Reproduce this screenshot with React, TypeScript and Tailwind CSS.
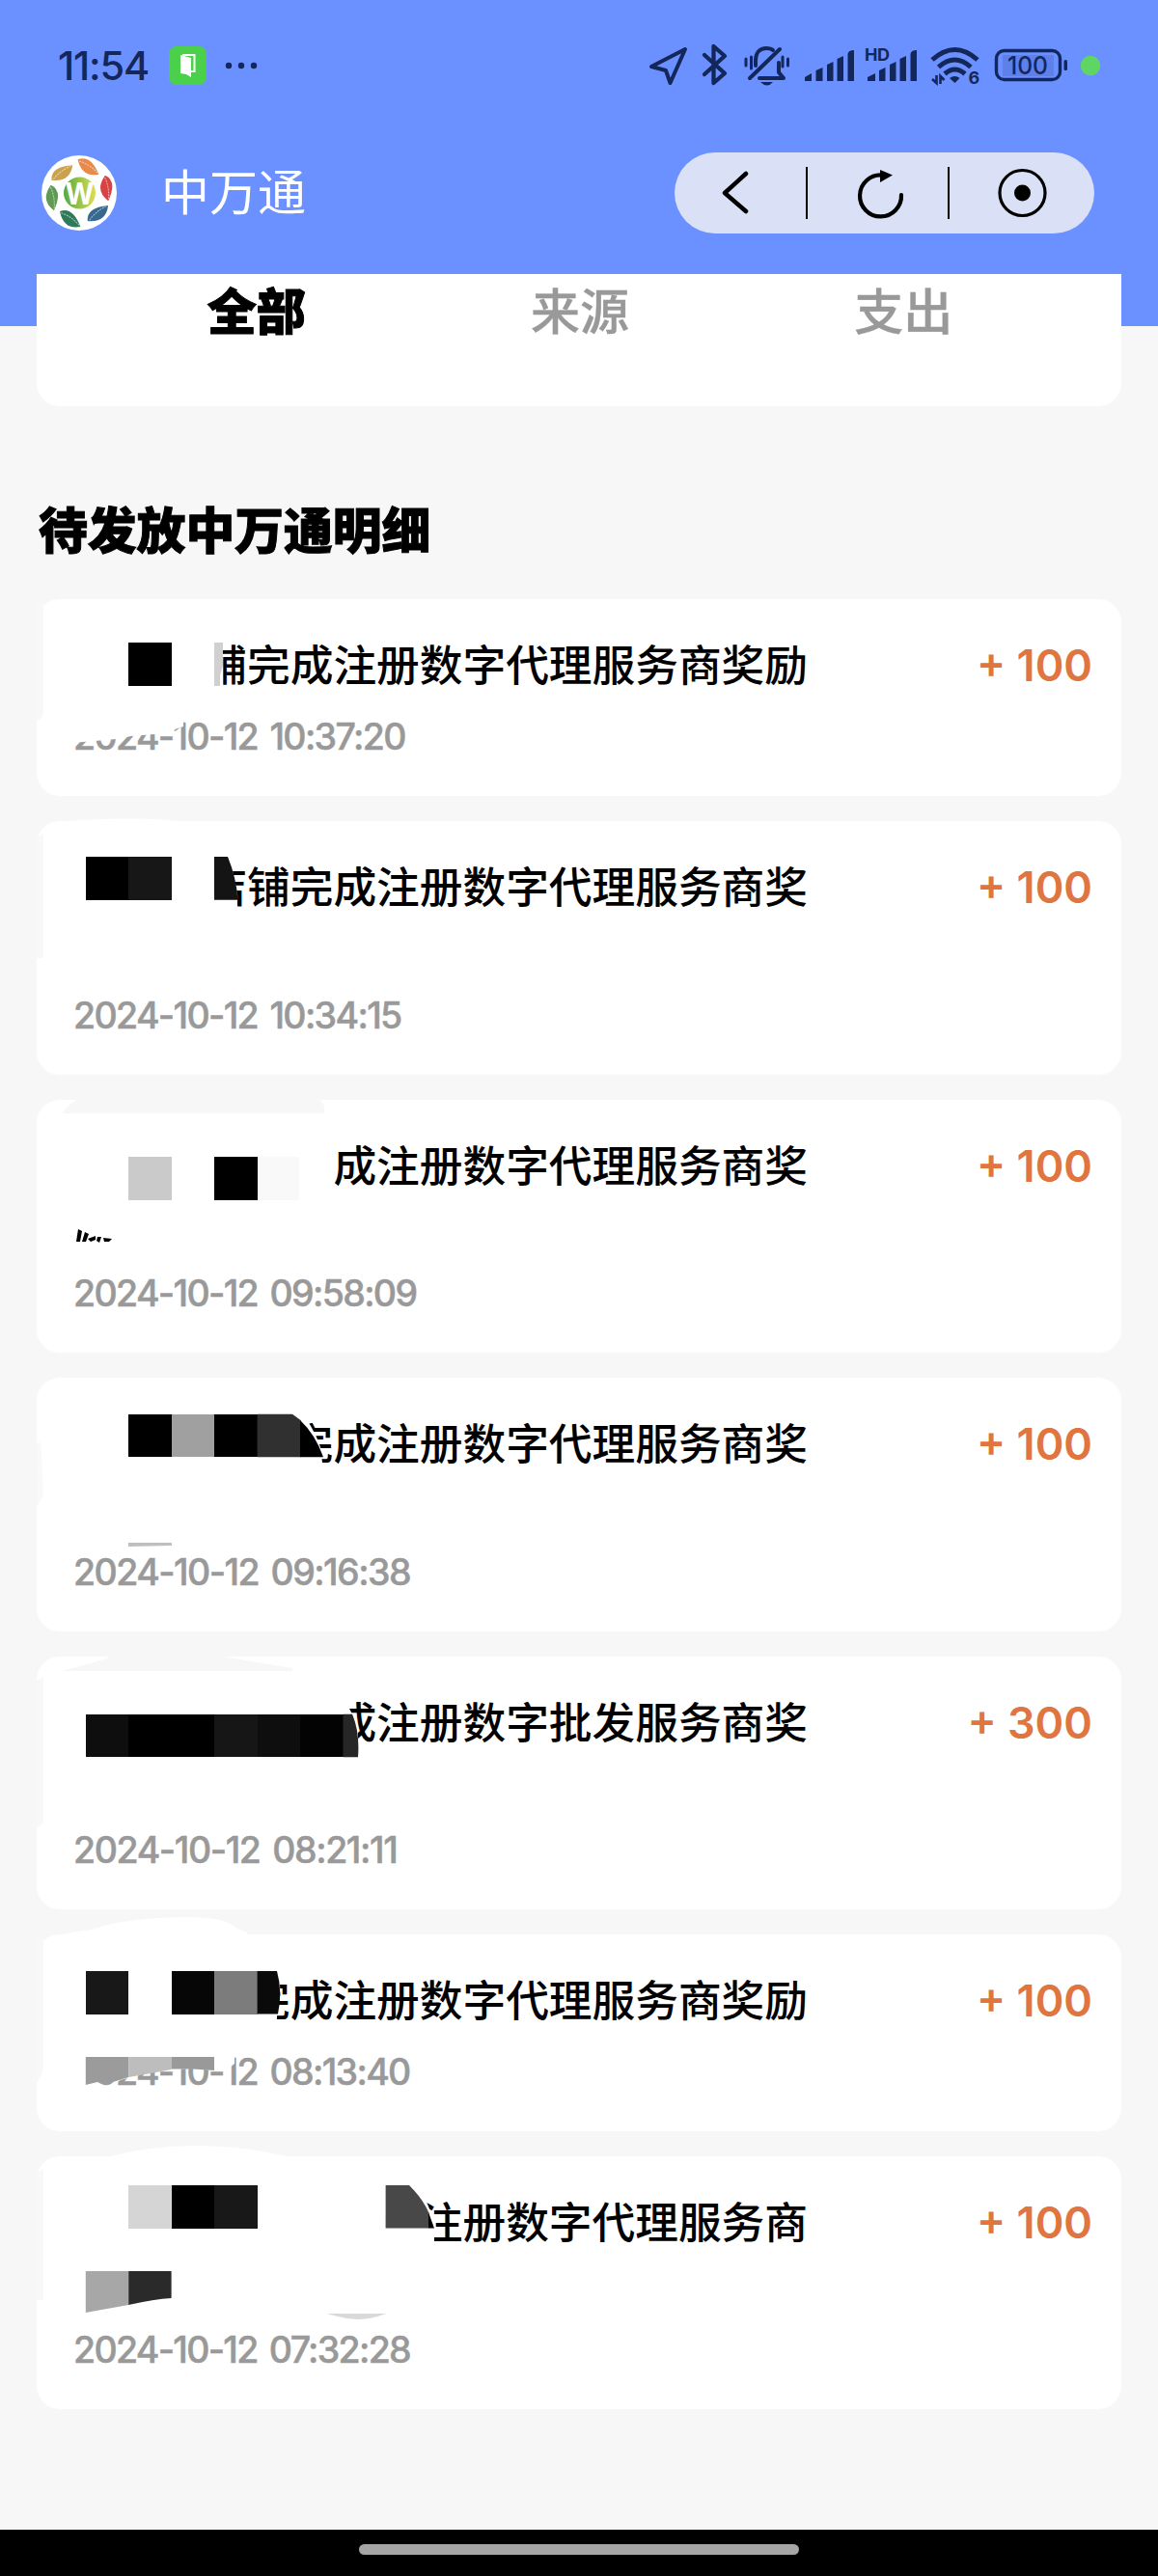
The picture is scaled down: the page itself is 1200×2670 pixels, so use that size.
import React from 'react';

type Cell = [x: number, width: number, fill: string];

interface RewardRecord {
  title: string;
  amount: string;
  time: string;
  size: string;
  tracking: string;
  // page y of the card, used as origin of the cover drawing
  top: number;
  cover: React.ReactNode;
}

const Cells = ({ y, h = 44.6, cells }: { y: number; h?: number; cells: Cell[] }) => (
  <g shapeRendering="crispEdges">
    {cells.map(([x, width, fill]) => (
      <rect key={x} x={x} y={y} width={width} height={h} fill={fill} />
    ))}
  </g>
);

const records: RewardRecord[] = [
  {
    title: '铺完成注册数字代理服务商奖励',
    amount: '+ 100',
    time: '2024-10-12 10:37:20',
    size: 'h-[204px]',
    tracking: 'tracking-[-1.65px]',
    top: 621,
    cover: (
      <>
        <path d="M38 621H45V740Q44 745 38 747Z" fill="#f8f8f8" />
        <path d="M200 655H231V690L228 715H200Z" fill="#fff" />
        <Cells y={666} cells={[[133.2, 44.4, '#000'], [222, 9, '#d0d0d0']]} />
        <path d="M228 700L231 690V711H228Z" fill="#fff" />
        <path d="M70 740H190V753L178 757L160 761L136 763L120 766L98 768L74 770Z" fill="#fff" />
      </>
    ),
  },
  {
    title: '店铺完成注册数字代理服务商奖',
    amount: '+ 100',
    time: '2024-10-12 10:34:15',
    size: 'h-[263px]',
    tracking: 'tracking-[-1.65px]',
    top: 851,
    cover: (
      <>
        <path d="M38 868L45 864V993H38Z" fill="#f8f8f8" />
        <path d="M58 852Q140 845 195 852Z" fill="#fff" />
        <path d="M200 880H233Q242 900 246 928V945H200Z" fill="#fff" />
        <Cells y={888} cells={[[88.8, 44.4, '#000'], [133.2, 44.4, '#171717']]} />
        <path d="M222 888H236Q245 910 246.500 932.700H222Z" fill="#141414" />
      </>
    ),
  },
  {
    title: '成注册数字代理服务商奖',
    amount: '+ 100',
    time: '2024-10-12 09:58:09',
    size: 'h-[262px]',
    tracking: 'tracking-[-1.65px]',
    top: 1140,
    cover: (
      <>
        <path d="M64 1154L70 1147L80 1139H331L336 1146V1154Z" fill="#f7f7f7" />
        <Cells
          y={1199}
          cells={[[133.2, 44.4, '#cacaca'], [222, 44.6, '#000'], [266.6, 43, '#f9f9f9']]}
        />
        <path
          d="M81 1274L85 1276L83 1287H79ZM88 1277L92 1279L89 1287H85ZM91 1284L99 1281V1285L94 1287ZM101 1282L105 1282L103 1288L100 1286ZM107 1283L116 1284L113 1287H108Z"
          fill="#000"
        />
      </>
    ),
  },
  {
    title: '完成注册数字代理服务商奖',
    amount: '+ 100',
    time: '2024-10-12 09:16:38',
    size: 'h-[263px]',
    tracking: 'tracking-[-1.55px]',
    top: 1428,
    cover: (
      <>
        <path d="M38 1496Q44 1490 43 1510L45 1550L38 1562Z" fill="#f9f9f9" />
        <path d="M295 1460H308Q324 1476 332 1500L336 1532H295Z" fill="#fff" />
        <Cells
          y={1465.7}
          cells={[[133.2, 44.4, '#000'], [177.6, 44.4, '#a0a0a0'], [222, 44.6, '#000']]}
        />
        <path d="M266.600 1465.700H303L311.500 1472V1510.300H266.600Z" fill="#303030" />
        <path d="M311 1472Q327 1487 335 1510.300H311Z" fill="#000" />
        <path d="M133 1599H178V1602L133 1603Z" fill="#bfbfbf" />
      </>
    ),
  },
  {
    title: '成注册数字批发服务商奖',
    amount: '+ 300',
    time: '2024-10-12 08:21:11',
    size: 'h-[262px]',
    tracking: 'tracking-[-1.4px]',
    top: 1717,
    cover: (
      <>
        <path d="M38 1742L45 1738V1890L38 1894Z" fill="#f8f8f8" />
        <path d="M64 1732L112 1719V1716H225L303 1729V1732Z" fill="#f7f7f7" />
        <path d="M340 1758H362V1771Q373 1790 371 1812V1822H340Z" fill="#fff" />
        <Cells
          y={1776.7}
          cells={[
            [88.8, 44.4, '#0e0e0e'],
            [133.2, 88.8, '#000'],
            [222, 44.6, '#161616'],
            [266.6, 44.4, '#0e0e0e'],
            [311, 44.6, '#030303'],
          ]}
        />
        <path d="M355.500 1776.700H365Q373 1795 371 1821.300H355.500Z" fill="#262626" />
      </>
    ),
  },
  {
    title: '完成注册数字代理服务商奖励',
    amount: '+ 100',
    time: '2024-10-12 08:13:40',
    size: 'h-[204px]',
    tracking: 'tracking-[-1.65px]',
    top: 2005,
    cover: (
      <>
        <path d="M38 2004H45V2145L38 2160Z" fill="#f8f8f8" />
        <path d="M45 2022V2012Q65 2003 95 2000Q130 1988 190 1987Q232 1986 244 1998L256 2003V2022Z" fill="#fff" />
        <path d="M250 2038H286Q294 2060 287 2084V2098H250Z" fill="#fff" />
        <Cells
          y={2043}
          cells={[[88.8, 44.4, '#181818'], [177.6, 44.4, '#060606'], [222, 44.6, '#7c7c7c']]}
        />
        <path d="M266.600 2043H287Q293 2065 288 2087.600H266.600Z" fill="#0a0a0a" />
        <path
          d="M72 2125H243V2139L238 2143L230 2147L222 2146L200 2144L177 2145L150 2149L121 2157L115 2156L104 2162L72 2164Z"
          fill="#fff"
        />
        <path d="M88.800 2132H133.200V2153L117 2158Q112 2162 105 2160L101 2158L88.800 2161Z" fill="#9b9b9b" />
        <path d="M133.200 2132H177.600V2145L156 2149L133.200 2153Z" fill="#bdbdbd" />
        <path d="M177.600 2132H222V2146L200 2144.500H177.600Z" fill="#999" />
      </>
    ),
  },
  {
    title: '注册数字代理服务商',
    amount: '+ 100',
    time: '2024-10-12 07:32:28',
    size: 'h-[262px]',
    tracking: 'tracking-[-1.7px]',
    top: 2235,
    cover: (
      <>
        <path d="M38 2252L45 2248V2384H38Z" fill="#f8f8f8" />
        <path d="M110 2236Q200 2212 302 2236Z" fill="#fff" />
        <path d="M425 2262H431Q446 2286 450 2306V2328H425Z" fill="#fff" />
        <Cells
          y={2265}
          cells={[[133.2, 44.4, '#d5d5d5'], [177.6, 44.4, '#000'], [222, 44.6, '#181818']]}
        />
        <path d="M399.600 2265H424Q439 2280 444.500 2294V2309.600H399.600Z" fill="#484848" />
        <path d="M444 2293L450 2309.600H444Z" fill="#000" />
        <path d="M88.800 2354H133.200V2389L88.800 2397Z" fill="#a7a7a7" />
        <path d="M133.200 2354H177.600V2382Q160 2383 133.200 2389Z" fill="#2a2a2a" />
        <path d="M338 2398H400Q375 2408 350 2401Z" fill="#d9d9d9" />
      </>
    ),
  },
];

export default function App() {
  return (
    <div className="w-[1200px] h-[2670px] flex flex-col overflow-hidden bg-[#f7f7f7] text-black font-['Inter','Noto_Sans_CJK_SC',sans-serif]">
      {/* Blue top area */}
      <header className="h-[338px] shrink-0 bg-[#6b90ff]">
        <StatusBar />
        <div className="h-[128px] mb-[20px] flex items-center justify-between pl-[43px] pr-[66px]">
          <div className="flex items-center">
            <Logo />
            <h1 className="ml-[46px] text-[50px] leading-none text-white">中万通</h1>
          </div>
          <Capsule />
        </div>

        {/* Tabs */}
        <nav className="h-[137px] mx-[38px] pl-[60px] pr-[58px] pt-[2px] flex items-start bg-white rounded-b-[24px] text-[51px] leading-[76px] text-[#999]">
          <span className="flex-1 text-center text-black font-black [-webkit-text-stroke:1px_#000]">全部</span>
          <span className="flex-1 text-center font-medium [-webkit-text-stroke:0.4px_#999]">来源</span>
          <span className="flex-1 text-center font-medium [-webkit-text-stroke:0.4px_#999]">支出</span>
        </nav>
      </header>

      <main className="flex-1 px-[38px]">
        <h2 className="mt-[175px] h-[76px] pl-[2px] text-[50.800px] leading-[76px] font-black [-webkit-text-stroke:1px_#000]">
          待发放中万通明细
        </h2>
        <div className="mt-[32px] flex flex-col gap-[26px]">
          {records.map((r) => (
            <RecordCard key={r.time} record={r} />
          ))}
        </div>
      </main>

      {/* Gesture bar */}
      <footer className="h-[48px] shrink-0 bg-black flex justify-center pt-[15px]">
        <div className="w-[456px] h-[11px] rounded-full bg-[#a5a5a5]" />
      </footer>
    </div>
  );
}

const RecordCard = ({ record }: { record: RewardRecord }) => (
  <section className={`relative flex flex-col justify-between bg-white rounded-[24px] pt-[40px] pb-[36px] pl-[38px] pr-[30px] ${record.size}`}>
    <div className="flex justify-between">
      <p className="w-[761px] text-right text-[44.700px] leading-[58px] font-medium whitespace-nowrap">{record.title}</p>
      <span className="text-[45px] leading-[58px] font-semibold text-[#e07540]">{record.amount}</span>
    </div>
    <time className={`text-[37.500px] leading-[50px] text-[#999] font-medium whitespace-nowrap [word-spacing:4px] [-webkit-text-stroke:0.5px_#999] ${record.tracking}`}>{record.time}</time>
    <svg
      className="absolute left-0 top-0 overflow-visible"
      width="500"
      height="200"
      viewBox={`38 ${record.top} 500 200`}
    >
      {record.cover}
    </svg>
  </section>
);

const Capsule = () => (
  <div className="w-[435px] h-[84px] rounded-full bg-[#dae0f5] flex items-center">
    <svg width="136" height="84" viewBox="699 158 136 84" fill="none" stroke="#000" strokeWidth="4.500" strokeLinecap="round" strokeLinejoin="round">
      <path d="M773 180L751 200L773 219" />
    </svg>
    <div className="w-[2px] h-[54px] bg-black" />
    <svg width="145" height="84" viewBox="837 158 145 84" fill="none">
      <path d="M914 181.500A21.500 21.500 0 1 0 934 202" stroke="#000" strokeWidth="4.200" strokeLinecap="round" />
      <path d="M912 176L925 181.500L912 189Z" fill="#000" />
    </svg>
    <div className="w-[2px] h-[54px] bg-black" />
    <svg width="150" height="84" viewBox="984 158 150 84">
      <circle cx="1059.500" cy="200" r="23.500" fill="none" stroke="#000" strokeWidth="3.200" />
      <circle cx="1059.500" cy="200" r="8.500" fill="#000" />
    </svg>
  </div>
);

const leaves = [
  { x: 21.3, y: 18, rotate: -48, fill: '#cba14c' },
  { x: 48.5, y: 12, rotate: 22, fill: '#e88a4a' },
  { x: 67.6, y: 34, rotate: 70, fill: '#d94242' },
  { x: 58.4, y: 60, rotate: -50, fill: '#39688f' },
  { x: 29.7, y: 66, rotate: 24, fill: '#2f7a58' },
  { x: 11.3, y: 44, rotate: 70, fill: '#5f9a54' },
];

const Logo = () => (
  <svg width="78" height="78" viewBox="0 0 78 78">
    <defs>
      <linearGradient id="core" x1="0" x2="1">
        <stop offset="0" stopColor="#57a83c" />
        <stop offset="1" stopColor="#d8df5a" />
      </linearGradient>
    </defs>
    <circle cx="39" cy="39" r="39" fill="#fff" />
    {leaves.map((leaf) => (
      <g key={leaf.fill} transform={`translate(${leaf.x} ${leaf.y}) rotate(${leaf.rotate})`}>
        <path d="M-13 -3Q-3 -13 13 3Q-2 13 -13 -3Z" fill={leaf.fill} />
        <path d="M-11 -2Q0 -3 11 2" fill="none" stroke="#fff" strokeOpacity="0.600" strokeWidth="1" strokeDasharray="2 1" />
      </g>
    ))}
    <circle cx="39.500" cy="39" r="16.500" fill="url(#core)" />
    <text x="39.500" y="51" textAnchor="middle" fontSize="31" fontWeight="700" fill="#fff" textLength="30" lengthAdjust="spacingAndGlyphs">W</text>
  </svg>
);

const StatusBar = () => (
  <div className="h-[136px] flex items-center justify-between pl-[60px] pr-[54px] text-[#14275a]">
    <div className="flex items-center">
      <span className="w-[115px] text-[41.500px] leading-none font-medium tracking-[-1.200px] pt-[2px]">11:54</span>
      <svg width="39" height="40" viewBox="0 0 39 40">
        <rect width="39" height="40" rx="8" fill="#4bd04b" />
        <path d="M12 9L23 12V32L18 29L12 28Z" fill="#fff" />
        <path d="M14 9H26.500V26H23" fill="none" stroke="#fff" strokeWidth="2" />
      </svg>
      <svg className="ml-[19px]" width="34" height="8" viewBox="0 0 34 8" fill="currentColor">
        <circle cx="4" cy="4" r="3.200" />
        <circle cx="17" cy="4" r="3.200" />
        <circle cx="30" cy="4" r="3.200" />
      </svg>
    </div>

    <div className="flex items-center">
      {/* location */}
      <svg width="50" height="48" viewBox="670 44 50 48" fill="none" stroke="currentColor" strokeWidth="4" strokeLinejoin="round">
        <path d="M710 51L675 69L690 73L694.500 86Z" />
      </svg>
      {/* bluetooth */}
      <svg width="44" height="48" viewBox="720 44 44 48" fill="none" stroke="currentColor" strokeWidth="4.300" strokeLinecap="round" strokeLinejoin="round">
        <path d="M730 57L751 76L739.500 86V48L751 58L730 77" />
      </svg>
      {/* muted bell */}
      <svg width="62" height="48" viewBox="764 44 62 48" fill="none" stroke="currentColor" strokeWidth="4" strokeLinecap="round" strokeLinejoin="round">
        <path d="M808 51L777 81" />
        <path d="M783 68V63C783 54 788 50 794 50Q799 50 801 52" />
        <path d="M787 81H812L807 75V65" />
        <path d="M773 61V68M778.500 59V71M811 59V69M816.500 61V68" strokeWidth="3" />
        <path d="M788 85H801Q795 92 788 85Z" fill="currentColor" stroke="none" />
      </svg>
      {/* signal */}
      <svg width="64" height="48" viewBox="826 44 64 48" fill="currentColor">
        <path d="M834 84V80L841 76V84ZM845.500 84V73L852.500 70V84ZM857 84V67L863.500 64V84ZM867.500 84V61L874 58V84ZM878.500 84V56Q879 52 885 52V84Z" />
      </svg>
      <svg width="66" height="48" viewBox="890 44 66 48" fill="currentColor">
        <text x="896" y="63" fontSize="18" fontWeight="700" textLength="26">HD</text>
        <path d="M899 84V80L907 76V84ZM911 84V73L917.500 70V84ZM922 84V67L928.500 64V84ZM932.500 84V61L939 58V84ZM943.500 84V56Q944 52 950 52V84Z" />
      </svg>
      {/* wifi 6 */}
      <svg width="66" height="48" viewBox="956 44 66 48" fill="none" stroke="currentColor" strokeWidth="5">
        <path d="M966 62Q989.500 41 1013 62" />
        <path d="M972.500 69.500Q989.500 54.500 1006 69.500" />
        <path d="M979 76.500Q989.500 67.500 1000 76.500" />
        <path d="M984 81Q989.500 77 994.500 81L989.500 86Z" fill="currentColor" stroke="none" />
        <path d="M970.500 78V86L966 82M974.500 87V79L978.500 83" strokeWidth="2.600" />
        <text x="1003.500" y="87" fontSize="18" fontWeight="700" fill="currentColor" stroke="none">6</text>
      </svg>
      {/* battery */}
      <svg width="94" height="48" viewBox="1022 44 94 48" fill="none">
        <rect x="1039" y="57" width="53" height="22" fill="#5f80e8" />
        <rect x="1032.500" y="52.500" width="66" height="30" rx="8" stroke="currentColor" strokeWidth="3.400" />
        <rect x="1102.500" y="62" width="3.500" height="11" rx="1.500" fill="currentColor" />
        <text x="1044" y="77" fontSize="26" fontWeight="500" fill="currentColor" textLength="42" lengthAdjust="spacingAndGlyphs">100</text>
      </svg>
      <svg width="30" height="48" viewBox="1116 44 30 48">
        <circle cx="1130" cy="68" r="10.300" fill="#5fd663" />
      </svg>
    </div>
  </div>
);
